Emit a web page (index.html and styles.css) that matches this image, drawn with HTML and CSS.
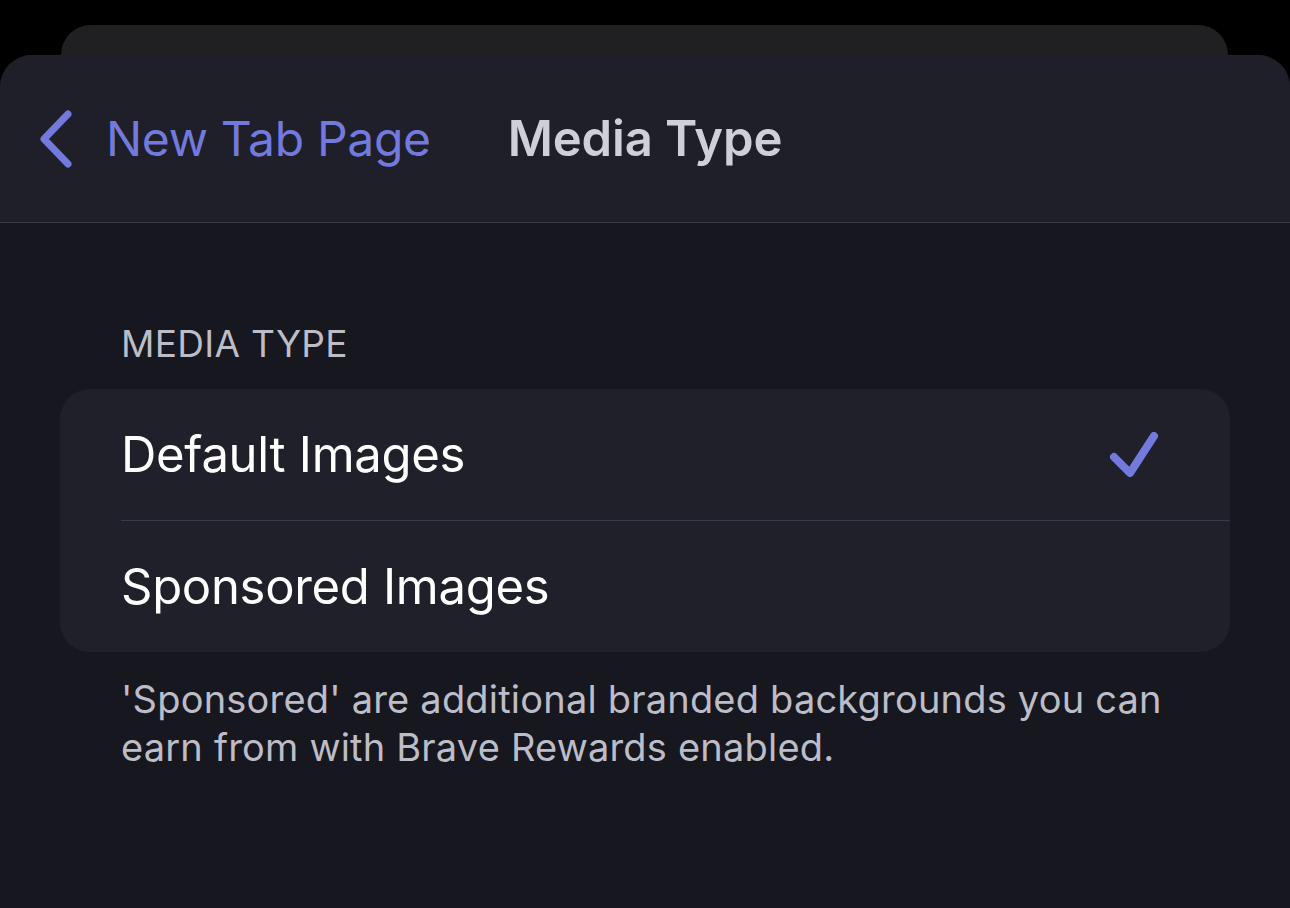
FILE: index.html
```html
<!DOCTYPE html>
<html>
<head>
<meta charset="utf-8">
<link rel="stylesheet" href="styles.css">
</head>
<body>
<div class="back-sheet"></div>
<div class="sheet">
  <header class="nav">
    <a class="back">
      <svg class="chev" width="40" height="60" viewBox="0 0 40 60"><path d="M30 4 L6 29 L30 54" fill="none" stroke="#737ade" stroke-width="7" stroke-linecap="round" stroke-linejoin="round"/></svg>
      <span class="back-label">New Tab Page</span>
    </a>
    <h1 class="title">Media Type</h1>
    <div></div>
  </header>
  <main class="content">
    <div class="section-header">MEDIA TYPE</div>
    <div class="group">
      <div class="row">
        <span class="row-label">Default Images</span>
        <svg class="check" width="50" height="46" viewBox="0 0 50 46"><path d="M5 25 L21 41 L45 4" fill="none" stroke="#737ade" stroke-width="8" stroke-linecap="round" stroke-linejoin="round"/></svg>
      </div>
      <div class="row">
        <span class="row-label">Sponsored Images</span>
      </div>
    </div>
    <p class="footer">'Sponsored' are additional branded backgrounds you can earn from with Brave Rewards enabled.</p>
  </main>
</div>
</body>
</html>
```
FILE: styles.css
```css
html, body {
  margin: 0;
  padding: 0;
  background: #000;
  height: 908px;
  overflow: hidden;
  font-family: Inter, "Noto Sans", sans-serif;
}
.back-sheet {
  margin: 25px 62px 0 61px;
  height: 30px;
  background: #202022;
  border-radius: 30px 30px 0 0;
}
.sheet {
  background: #17171f;
  border-radius: 32px 32px 0 0;
  height: 853px;
  overflow: hidden;
}
.nav {
  height: 167px;
  background: #1f1f29;
  border-bottom: 1px solid #3a3a44;
  display: grid;
  grid-template-columns: 1fr auto 1fr;
  align-items: center;
}
.back {
  display: flex;
  align-items: center;
  padding-left: 38px;
  color: #737ade;
}
.chev {
  margin-right: 28px;
  margin-top: 2px;
}
.back-label {
  font-size: 48px;
  letter-spacing: -0.3px;
}
.title {
  margin: 0;
  font-size: 49px;
  font-weight: 600;
  color: #cfcfd9;
  letter-spacing: -0.1px;
}
.content {
  padding: 97px 60px 0 60px;
}
.section-header {
  padding-left: 61px;
  font-size: 37px;
  color: #bdbdc8;
  line-height: 48px;
  letter-spacing: 0.3px;
  margin-bottom: 21px;
}
.group {
  background: #20202b;
  border-radius: 30px;
}
.row {
  height: 131px;
  margin-left: 61px;
  padding-right: 71px;
  display: flex;
  align-items: center;
  justify-content: space-between;
  color: #fff;
}
.row + .row {
  border-top: 1px solid #3a3a48;
}
.row-label {
  font-size: 49px;
  letter-spacing: -0.3px;
}
.check {
  margin-top: 1px;
}
.footer {
  margin: 23px 0 0 0;
  padding: 0 61px;
  font-size: 38px;
  line-height: 48px;
  letter-spacing: 0.2px;
  color: #bdbdc8;
}
```
